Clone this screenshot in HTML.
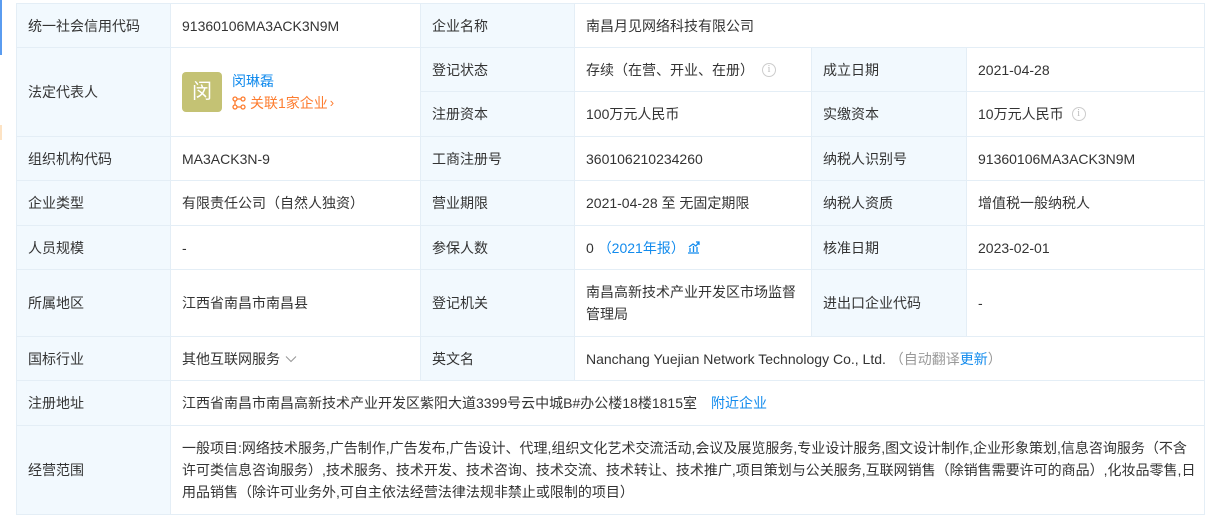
<!DOCTYPE html>
<html><head><meta charset="utf-8"><style>
html,body{margin:0;padding:0;background:#fff;width:1210px;height:520px;overflow:hidden;}
body{font-family:"Liberation Sans","Noto Sans CJK SC",sans-serif;font-size:14px;color:#333;position:relative;}
.c{position:absolute;box-sizing:border-box;border:1px solid #e4eef6;margin:-1px 0 0 -1px;display:flex;align-items:center;padding:0 11px;line-height:22px;background:#fff;}
.l{background:#f2f9fe;}
.a{color:#128bed;}
.g{color:#999;}
.info{display:inline-block;width:14px;height:14px;border:1px solid #ccc;border-radius:50%;box-sizing:border-box;font-size:10px;line-height:12px;text-align:center;color:#bbb;margin-left:8px;font-family:"Liberation Serif",serif;}
</style></head><body>
<div style="position:absolute;left:0;top:0;width:2px;height:55px;background:#5a9cf0"></div>
<div style="position:absolute;left:0;top:125px;width:2px;height:15px;background:#fde3c4"></div>

<!-- row 0 -->
<div class="c l" style="left:17px;top:4px;width:155px;height:45px">统一社会信用代码</div>
<div class="c" style="left:171px;top:4px;width:251px;height:45px">91360106MA3ACK3N9M</div>
<div class="c l" style="left:421px;top:4px;width:155px;height:45px">企业名称</div>
<div class="c" style="left:575px;top:4px;width:631px;height:45px">南昌月见网络科技有限公司</div>

<!-- rows 1-2 -->
<div class="c l" style="left:17px;top:48px;width:155px;height:90px">法定代表人</div>
<div class="c" style="left:171px;top:48px;width:251px;height:90px">
 <div style="width:40px;height:40px;border-radius:4px;background:#c4c274;color:#fff;font-size:20px;display:flex;align-items:center;justify-content:center;margin-right:10px">闵</div>
 <div><div class="a" style="line-height:22px">闵琳磊</div>
 <div style="color:#fd7c2f;line-height:22px;display:flex;align-items:center"><svg width="14" height="14" viewBox="0 0 14 14" style="margin-right:4px" fill="none" stroke="#fd7c2f" stroke-width="1.3"><circle cx="3" cy="3" r="2"/><circle cx="11" cy="3" r="2"/><circle cx="3" cy="11" r="2"/><circle cx="11" cy="11" r="2"/><path d="M5 3h4M3 5v4M5 11h4"/></svg>关联1家企业 <span style="font-size:13px;margin-left:2px">›</span></div></div>
</div>
<div class="c l" style="left:421px;top:48px;width:155px;height:45px">登记状态</div>
<div class="c" style="left:575px;top:48px;width:238px;height:45px">存续（在营、开业、在册）<span class="info">i</span></div>
<div class="c l" style="left:812px;top:48px;width:156px;height:45px">成立日期</div>
<div class="c" style="left:967px;top:48px;width:239px;height:45px">2021-04-28</div>
<div class="c l" style="left:421px;top:92px;width:155px;height:46px">注册资本</div>
<div class="c" style="left:575px;top:92px;width:238px;height:46px">100万元人民币</div>
<div class="c l" style="left:812px;top:92px;width:156px;height:46px">实缴资本</div>
<div class="c" style="left:967px;top:92px;width:239px;height:46px">10万元人民币<span class="info">i</span></div>

<!-- row 3 -->
<div class="c l" style="left:17px;top:137px;width:155px;height:45px">组织机构代码</div>
<div class="c" style="left:171px;top:137px;width:251px;height:45px">MA3ACK3N-9</div>
<div class="c l" style="left:421px;top:137px;width:155px;height:45px">工商注册号</div>
<div class="c" style="left:575px;top:137px;width:238px;height:45px">360106210234260</div>
<div class="c l" style="left:812px;top:137px;width:156px;height:45px">纳税人识别号</div>
<div class="c" style="left:967px;top:137px;width:239px;height:45px">91360106MA3ACK3N9M</div>

<!-- row 4 -->
<div class="c l" style="left:17px;top:181px;width:155px;height:46px">企业类型</div>
<div class="c" style="left:171px;top:181px;width:251px;height:46px">有限责任公司（自然人独资）</div>
<div class="c l" style="left:421px;top:181px;width:155px;height:46px">营业期限</div>
<div class="c" style="left:575px;top:181px;width:238px;height:46px">2021-04-28 至 无固定期限</div>
<div class="c l" style="left:812px;top:181px;width:156px;height:46px">纳税人资质</div>
<div class="c" style="left:967px;top:181px;width:239px;height:46px">增值税一般纳税人</div>

<!-- row 5 -->
<div class="c l" style="left:17px;top:226px;width:155px;height:45px">人员规模</div>
<div class="c" style="left:171px;top:226px;width:251px;height:45px">-</div>
<div class="c l" style="left:421px;top:226px;width:155px;height:45px">参保人数</div>
<div class="c" style="left:575px;top:226px;width:238px;height:45px">0&nbsp;<span class="a">（2021年报）</span><svg width="13" height="13" viewBox="0 0 13 13" style="margin-left:2px" fill="none" stroke="#128bed" stroke-width="1.3"><path d="M1 12h11M3 11V7M6.5 11V5M10 11V6M2 6l4-3 3 2 3-4M9 1h3v3"/></svg></div>
<div class="c l" style="left:812px;top:226px;width:156px;height:45px">核准日期</div>
<div class="c" style="left:967px;top:226px;width:239px;height:45px">2023-02-01</div>

<!-- row 6 -->
<div class="c l" style="left:17px;top:270px;width:155px;height:68px">所属地区</div>
<div class="c" style="left:171px;top:270px;width:251px;height:68px">江西省南昌市南昌县</div>
<div class="c l" style="left:421px;top:270px;width:155px;height:68px">登记机关</div>
<div class="c" style="left:575px;top:270px;width:238px;height:68px">南昌高新技术产业开发区市场监督管理局</div>
<div class="c l" style="left:812px;top:270px;width:156px;height:68px">进出口企业代码</div>
<div class="c" style="left:967px;top:270px;width:239px;height:68px">-</div>

<!-- row 7 -->
<div class="c l" style="left:17px;top:337px;width:155px;height:45px">国标行业</div>
<div class="c" style="left:171px;top:337px;width:251px;height:45px">其他互联网服务<svg width="12" height="8" viewBox="0 0 12 8" style="margin-left:5px" fill="none" stroke="#999" stroke-width="1.1"><path d="M1 1.5l5 5 5-5"/></svg></div>
<div class="c l" style="left:421px;top:337px;width:155px;height:45px">英文名</div>
<div class="c" style="left:575px;top:337px;width:631px;height:45px">Nanchang Yuejian Network Technology Co., Ltd.&nbsp;<span class="g">（自动翻译<span class="a">更新</span>）</span></div>

<!-- row 8 -->
<div class="c l" style="left:17px;top:381px;width:155px;height:46px">注册地址</div>
<div class="c" style="left:171px;top:381px;width:1035px;height:46px">江西省南昌市南昌高新技术产业开发区紫阳大道3399号云中城B#办公楼18楼1815室<span class="a" style="margin-left:14px">附近企业</span></div>

<!-- row 9 -->
<div class="c l" style="left:17px;top:426px;width:155px;height:90px">经营范围</div>
<div class="c" style="left:171px;top:426px;width:1035px;height:90px;white-space:nowrap;overflow:hidden"><div>一般项目:网络技术服务,广告制作,广告发布,广告设计、代理,组织文化艺术交流活动,会议及展览服务,专业设计服务,图文设计制作,企业形象策划,信息咨询服务（不含<br>许可类信息咨询服务）,技术服务、技术开发、技术咨询、技术交流、技术转让、技术推广,项目策划与公关服务,互联网销售（除销售需要许可的商品）,化妆品零售,日<br>用品销售（除许可业务外,可自主依法经营法律法规非禁止或限制的项目）</div></div>
</body></html>
